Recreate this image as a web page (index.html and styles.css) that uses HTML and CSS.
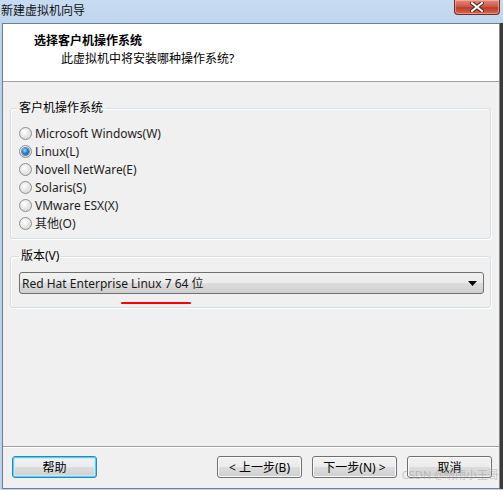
FILE: index.html
```html
<!DOCTYPE html>
<html lang="zh-CN">
  <head>
    <meta charset="UTF-8" />
    <meta name="viewport" content="width=device-width, initial-scale=1.0" />
    <title>新建虚拟机向导</title>
    <link rel="stylesheet" href="styles.css">
  </head>
  <body>
    <div class="window">
      <div class="titlebar">
        <span class="title">新建虚拟机向导</span>
        <button class="close" aria-label="关闭">
          <svg width="14" height="10" viewBox="0 0 14 10">
            <path d="M2 1 L12 9 M12 1 L2 9" stroke="#4a2520" stroke-width="4" stroke-linecap="square" />
            <path d="M2 1 L12 9 M12 1 L2 9" stroke="#ffffff" stroke-width="2" stroke-linecap="square" />
          </svg>
        </button>
      </div>

      <div class="client">
        <div class="header">
          <h1>选择客户机操作系统</h1>
          <p>此虚拟机中将安装哪种操作系统?</p>
        </div>

        <div class="content">
          <fieldset class="group">
            <legend>客户机操作系统</legend>
            <div class="radios">
              <label class="radio"><span class="dot"></span>Microsoft Windows(W)</label>
              <label class="radio checked"><span class="dot"></span>Linux(L)</label>
              <label class="radio"><span class="dot"></span>Novell NetWare(E)</label>
              <label class="radio"><span class="dot"></span>Solaris(S)</label>
              <label class="radio"><span class="dot"></span>VMware ESX(X)</label>
              <label class="radio"><span class="dot"></span>其他(O)</label>
            </div>
          </fieldset>

          <fieldset class="group version">
            <legend>版本(V)</legend>
            <div class="combo">
              <span>Red Hat Enterprise Linux 7 64 位</span>
              <svg width="9" height="5" viewBox="0 0 9 5"><path d="M0 0 H9 L4.5 5 Z" fill="#000" /></svg>
            </div>
            <div class="mark"></div>
          </fieldset>
        </div>

        <div class="footer">
          <button class="btn default">帮助</button>
          <div class="nav">
            <button class="btn">&lt; 上一步(B)</button>
            <button class="btn">下一步(N) &gt;</button>
            <button class="btn">取消</button>
          </div>
          <span class="watermark">CSDN @晴雨小王哥</span>
        </div>
      </div>
    </div>
  </body>
</html>
```

FILE: styles.css
```css
* {
  margin: 0;
  padding: 0;
  box-sizing: border-box;
}
body {
  font-family: "Noto Sans", "Noto Sans CJK SC", sans-serif;
  font-size: 12px;
  color: #000;
  background: #c4d8ee;
}
.window {
  width: 503px;
  height: 490px;
  display: flex;
  flex-direction: column;
  background: linear-gradient(#c7dcf2, #b9d1ea 40px, #bcd3ec);
}
.titlebar {
  height: 23px;
  display: flex;
  justify-content: space-between;
  align-items: flex-start;
}
.title {
  padding: 3px 0 0 1px;
  line-height: 16px;
  color: #111;
}
.close {
  width: 46px;
  height: 15px;
  margin-right: 3px;
  border: 1px solid #6e2a22;
  border-top: none;
  border-radius: 0 0 4px 4px;
  background: linear-gradient(#e08a7c, #cd5a48 45%, #c23b27 55%, #d06a50);
  box-shadow: inset 0 0 0 1px rgba(255, 200, 190, 0.5);
  display: flex;
  align-items: center;
  justify-content: center;
}
.client {
  height: 466px;
  margin: 0 3px 0 2px;
  border: 1px solid #6f7f91;
  border-right: 1px solid #8a8a8a;
  background: #f0f0f0;
  display: flex;
  flex-direction: column;
  position: relative;
  box-shadow: 3px 0 0 #3b3b3b;
}
.header {
  background: #fff;
  height: 58px;
  padding: 8px 0 0 31px;
  border-bottom: 1px solid #a0a0a0;
}
.header h1 {
  font-size: 12px;
  font-weight: bold;
  line-height: 18px;
}
.header p {
  line-height: 18px;
  padding-left: 27px;
}
.content {
  flex: 1;
  padding: 18px 8px 0 7px;
}
.group {
  border: 1px solid #d5dfe5;
  border-radius: 3px;
  padding: 8px 6px 6px 6px;
  box-shadow: inset 1px 1px 0 #fff, 1px 1px 0 #fff;
}
.group legend {
  padding: 0 2px;
  line-height: 16px;
  color: #000;
}
.radios {
  padding-left: 2px;
}
.radio {
  display: flex;
  align-items: center;
  gap: 3px;
  height: 18px;
  color: #1e1e1e;
}
.dot {
  width: 13px;
  height: 13px;
  border-radius: 50%;
  border: 1px solid #8e8f8f;
  background: radial-gradient(circle at 40% 35%, #ffffff, #e6e6e6 50%, #cfcfcf);
  display: flex;
  align-items: center;
  justify-content: center;
}
.checked .dot::after {
  content: "";
  width: 7px;
  height: 7px;
  border-radius: 50%;
  background: radial-gradient(circle at 40% 35%, #9fd6ff, #2a7fc8 45%, #0f4f94);
  box-shadow: 0 0 0 1px #5a8cbf;
}
.version {
  margin-top: 9px;
  padding: 8px 6px 13px 8px;
  position: relative;
}
.combo {
  height: 22px;
  border: 1px solid #707070;
  border-radius: 3px;
  background: linear-gradient(#f2f2f2, #ebebeb 50%, #dddddd 50%, #cfcfcf);
  display: flex;
  align-items: center;
  justify-content: space-between;
  padding: 0 6px 0 2px;
  color: #1a1a1a;
}
.mark {
  position: absolute;
  left: 110px;
  top: 38px;
  width: 70px;
  height: 2px;
  background: #ff0000;
  border-radius: 1px;
}
.footer {
  height: 42px;
  border-top: 1px solid #a0a0a0;
  box-shadow: inset 0 1px 0 #fff;
  padding: 9px 7px 0 9px;
  display: flex;
  justify-content: space-between;
  position: relative;
}
.nav {
  display: flex;
  gap: 10px;
}
.btn {
  width: 85px;
  height: 22px;
  font-family: inherit;
  font-size: 12px;
  color: #000;
  border: 1px solid #707070;
  border-radius: 3px;
  background: linear-gradient(#f2f2f2, #ebebeb 50%, #dddddd 50%, #cfcfcf);
  box-shadow: inset 0 0 0 1px #fbfbfb;
}
.btn.default {
  border-color: #3c7fb1;
  box-shadow: inset 0 0 0 1px #48d8fb, inset 0 0 0 2px #c4ecfb;
}
.watermark {
  position: absolute;
  right: 0;
  bottom: 6px;
  font-size: 11px;
  color: rgba(160, 160, 160, 0.55);
  white-space: nowrap;
}
```
